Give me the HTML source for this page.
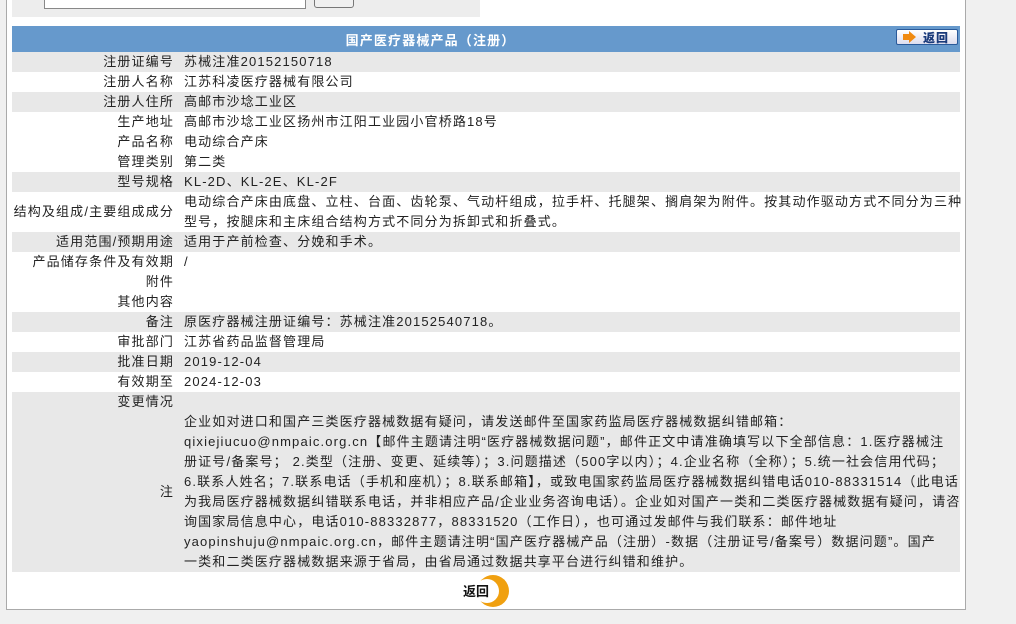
<!DOCTYPE html>
<html><head><meta charset="utf-8">
<style>
body{margin:0;width:1016px;height:624px;background:#f0f0f0;font-family:"Liberation Sans","Noto Sans CJK SC",sans-serif;font-size:13px;color:#222;position:relative;overflow:hidden}
#panel{position:absolute;left:6px;top:-2px;width:958px;height:610px;background:#fff;border:1px solid #aaa}
#search{position:absolute;left:12px;top:0;width:468px;height:17px;background:#ededed}
#inp{position:absolute;left:32px;top:-2px;width:260px;height:9px;background:#fff;border:1px solid #888}
#btn{position:absolute;left:302px;top:-4px;width:38px;height:10px;background:#f0f0f0;border:1px solid #777;border-radius:3px}
table{position:absolute;left:12px;top:26px;width:948px;border-collapse:collapse;letter-spacing:1.15px;table-layout:fixed}
td{padding:0 0 0 2px;height:20px;line-height:20px;vertical-align:middle;white-space:nowrap;overflow:visible}
td.l{text-align:right;padding:0 8px 0 0}
tr.g td{background:#e8e8e8}
th{height:24px;background:#6699cc;color:#fff;font-weight:bold;font-size:13px;position:relative;padding-right:112px}
.rb{position:absolute;right:2px;top:3px;width:62px;height:16px;border:1px solid #2a5a9a;border-radius:2px;background:linear-gradient(#fff,#dde);color:#1a3a7a;font-size:12px;line-height:16px;text-align:right;box-sizing:border-box;letter-spacing:1px}
.ar{position:absolute;left:6px;top:4px;width:6px;height:6px;background:#f08a10}
.ar2{position:absolute;left:12px;top:1px;border-left:7px solid #f08a10;border-top:6px solid transparent;border-bottom:6px solid transparent}
td.note{line-height:20px;vertical-align:top}
#ret{position:absolute;left:463px;top:575px}
</style></head><body>
<div id="panel"></div>
<div id="search"><div id="inp"></div><div id="btn"></div></div>
<table>
<colgroup><col style="width:170px"><col style="width:778px"></colgroup>
<tr><th colspan="2">国产医疗器械产品（注册）<div class="rb"><div class="ar"></div><div class="ar2"></div><b style="margin-right:8px">返回</b></div></th></tr>
<tr class="g"><td class="l">注册证编号</td><td>苏械注准20152150718</td></tr>
<tr><td class="l">注册人名称</td><td>江苏科凌医疗器械有限公司</td></tr>
<tr class="g"><td class="l">注册人住所</td><td>高邮市沙埝工业区</td></tr>
<tr><td class="l">生产地址</td><td>高邮市沙埝工业区扬州市江阳工业园小官桥路18号</td></tr>
<tr><td class="l">产品名称</td><td>电动综合产床</td></tr>
<tr><td class="l">管理类别</td><td>第二类</td></tr>
<tr class="g"><td class="l">型号规格</td><td>KL-2D、KL-2E、KL-2F</td></tr>
<tr><td class="l" style="height:40px">结构及组成/主要组成成分</td><td>电动综合产床由底盘、立柱、台面、齿轮泵、气动杆组成，拉手杆、托腿架、搁肩架为附件。按其动作驱动方式不同分为三种<br>型号，按腿床和主床组合结构方式不同分为拆卸式和折叠式。</td></tr>
<tr class="g"><td class="l">适用范围/预期用途</td><td>适用于产前检查、分娩和手术。</td></tr>
<tr><td class="l">产品储存条件及有效期</td><td>/</td></tr>
<tr><td class="l">附件</td><td></td></tr>
<tr><td class="l">其他内容</td><td></td></tr>
<tr class="g"><td class="l">备注</td><td>原医疗器械注册证编号：苏械注准20152540718。</td></tr>
<tr><td class="l">审批部门</td><td>江苏省药品监督管理局</td></tr>
<tr class="g"><td class="l">批准日期</td><td>2019-12-04</td></tr>
<tr><td class="l">有效期至</td><td>2024-12-03</td></tr>
<tr class="g"><td class="l">变更情况</td><td></td></tr>
<tr class="g"><td class="l" style="height:160px">注</td><td class="note">企业如对进口和国产三类医疗器械数据有疑问，请发送邮件至国家药监局医疗器械数据纠错邮箱：<br>qixiejiucuo@nmpaic.org.cn【邮件主题请注明“医疗器械数据问题”，邮件正文中请准确填写以下全部信息：1.医疗器械注<br>册证号/备案号； 2.类型（注册、变更、延续等）；3.问题描述（500字以内）；4.企业名称（全称）；5.统一社会信用代码；<br>6.联系人姓名；7.联系电话（手机和座机）；8.联系邮箱】，或致电国家药监局医疗器械数据纠错电话010-88331514（此电话<br>为我局医疗器械数据纠错联系电话，并非相应产品/企业业务咨询电话）。企业如对国产一类和二类医疗器械数据有疑问，请咨<br>询国家局信息中心，电话010-88332877，88331520（工作日），也可通过发邮件与我们联系：邮件地址<br>yaopinshuju@nmpaic.org.cn，邮件主题请注明“国产医疗器械产品（注册）-数据（注册证号/备案号）数据问题”。国产<br>一类和二类医疗器械数据来源于省局，由省局通过数据共享平台进行纠错和维护。</td></tr>
</table>
<div id="ret"><svg width="50" height="34"><circle cx="30" cy="16" r="16" fill="#f0a010"/><circle cx="24" cy="16" r="12" fill="#fff"/><text x="0" y="21" font-size="13" font-weight="bold" font-family="Noto Sans CJK SC,sans-serif" fill="#111">返回</text></svg></div>
</body></html>
